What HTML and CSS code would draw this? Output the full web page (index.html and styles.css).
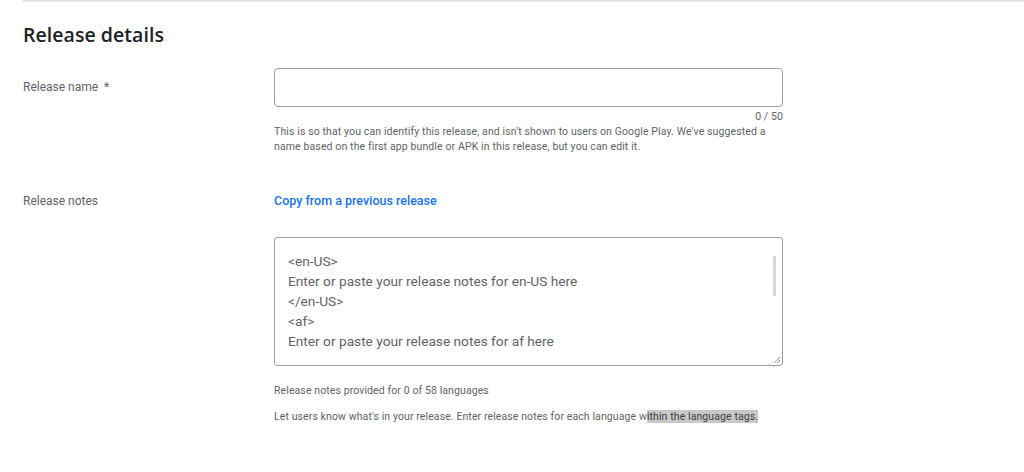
FILE: index.html
```html
<!DOCTYPE html>
<html>
<head>
<meta charset="utf-8">
<link rel="stylesheet" href="styles.css">
</head>
<body>
<div class="page">
  <h1 class="title">Release details</h1>

  <div class="row row-name">
    <div class="label">Release name&nbsp; *</div>
    <div class="field">
      <div class="input"></div>
      <div class="counter">0 / 50</div>
      <p class="help">This is so that you can identify this release, and isn't shown to users on Google Play. We've suggested a name based on the first app bundle or APK in this release, but you can edit it.</p>
    </div>
  </div>

  <div class="row row-notes">
    <div class="label">Release notes</div>
    <div class="field">
      <a class="link">Copy from a previous release</a>
      <div class="textarea">
        <div class="lines">
          <div>&lt;en-US&gt;</div>
          <div>Enter or paste your release notes for en-US here</div>
          <div>&lt;/en-US&gt;</div>
          <div>&lt;af&gt;</div>
          <div>Enter or paste your release notes for af here</div>
        </div>
        <div class="thumb"></div>
        <svg class="grip" width="8" height="8" viewBox="0 0 8 8"><path d="M7 1 L1 7 M7 4 L4 7" stroke="#9e9e9e" stroke-width="1" fill="none"/></svg>
      </div>
      <p class="small first">Release notes provided for 0 of 58 languages</p>
      <p class="small">Let users know what's in your release. Enter release notes for each language w<span class="sel">ithin the language tags.</span></p>
    </div>
  </div>
</div>
</body>
</html>
```

FILE: styles.css
```css
html, body {
  margin: 0;
  padding: 0;
  background: #ffffff;
}
body {
  font-family: Roboto, "Liberation Sans", Arial, sans-serif;
  color: #5f6368;
}
.page {
  margin-left: 23px;
  border-top: 2px solid #e3e3e6;
  height: 470px;
}
.title {
  margin: 21px 0 0 0;
  font-family: "Open Sans", Roboto, sans-serif;
  font-size: 19.5px;
  font-weight: 600;
  line-height: 24px;
  color: #202124;
  letter-spacing: 0.05px;
}
.row {
  display: grid;
  grid-template-columns: 251px 509px;
}
.row-name {
  margin-top: 21px;
}
.label {
  font-size: 12px;
  line-height: 16px;
  color: #5f6368;
}
.row-name .label {
  margin-top: 11px;
}
.input {
  height: 37px;
  border: 1px solid #9aa0a6;
  border-radius: 4px;
}
.counter {
  text-align: right;
  font-size: 10.5px;
  line-height: 14px;
  margin-top: 3px;
  color: #5f6368;
  letter-spacing: 0.1px;
}
.help {
  margin: 0;
  font-size: 10.5px;
  line-height: 15px;
  letter-spacing: 0.12px;
  color: #5f6368;
}
.row-notes {
  margin-top: 39px;
}
.row-notes .label {
  margin-top: 0;
}
.link {
  display: block;
  font-size: 12.5px;
  line-height: 16px;
  font-weight: 500;
  color: #1a73e8;
  text-decoration: none;
}
.textarea {
  position: relative;
  margin-top: 28px;
  height: 127px;
  border: 1px solid #9aa0a6;
  border-radius: 3px;
  overflow: hidden;
}
.lines {
  padding: 13px 0 0 13px;
  font-size: 13.7px;
  line-height: 20px;
  color: #5f6368;
}
.thumb {
  position: absolute;
  right: 6px;
  top: 18px;
  width: 3px;
  height: 40px;
  background: #d6d6d6;
  border-radius: 1px;
}
.grip {
  position: absolute;
  right: 1px;
  bottom: 1px;
}
.small {
  margin: 0;
  font-size: 10.5px;
  line-height: 14px;
  letter-spacing: 0.1px;
  color: #5f6368;
}
.small.first {
  margin-top: 18px;
}
.small + .small {
  margin-top: 12px;
}
.sel {
  background: #c8c8c8;
  color: #3c4043;
}
```
